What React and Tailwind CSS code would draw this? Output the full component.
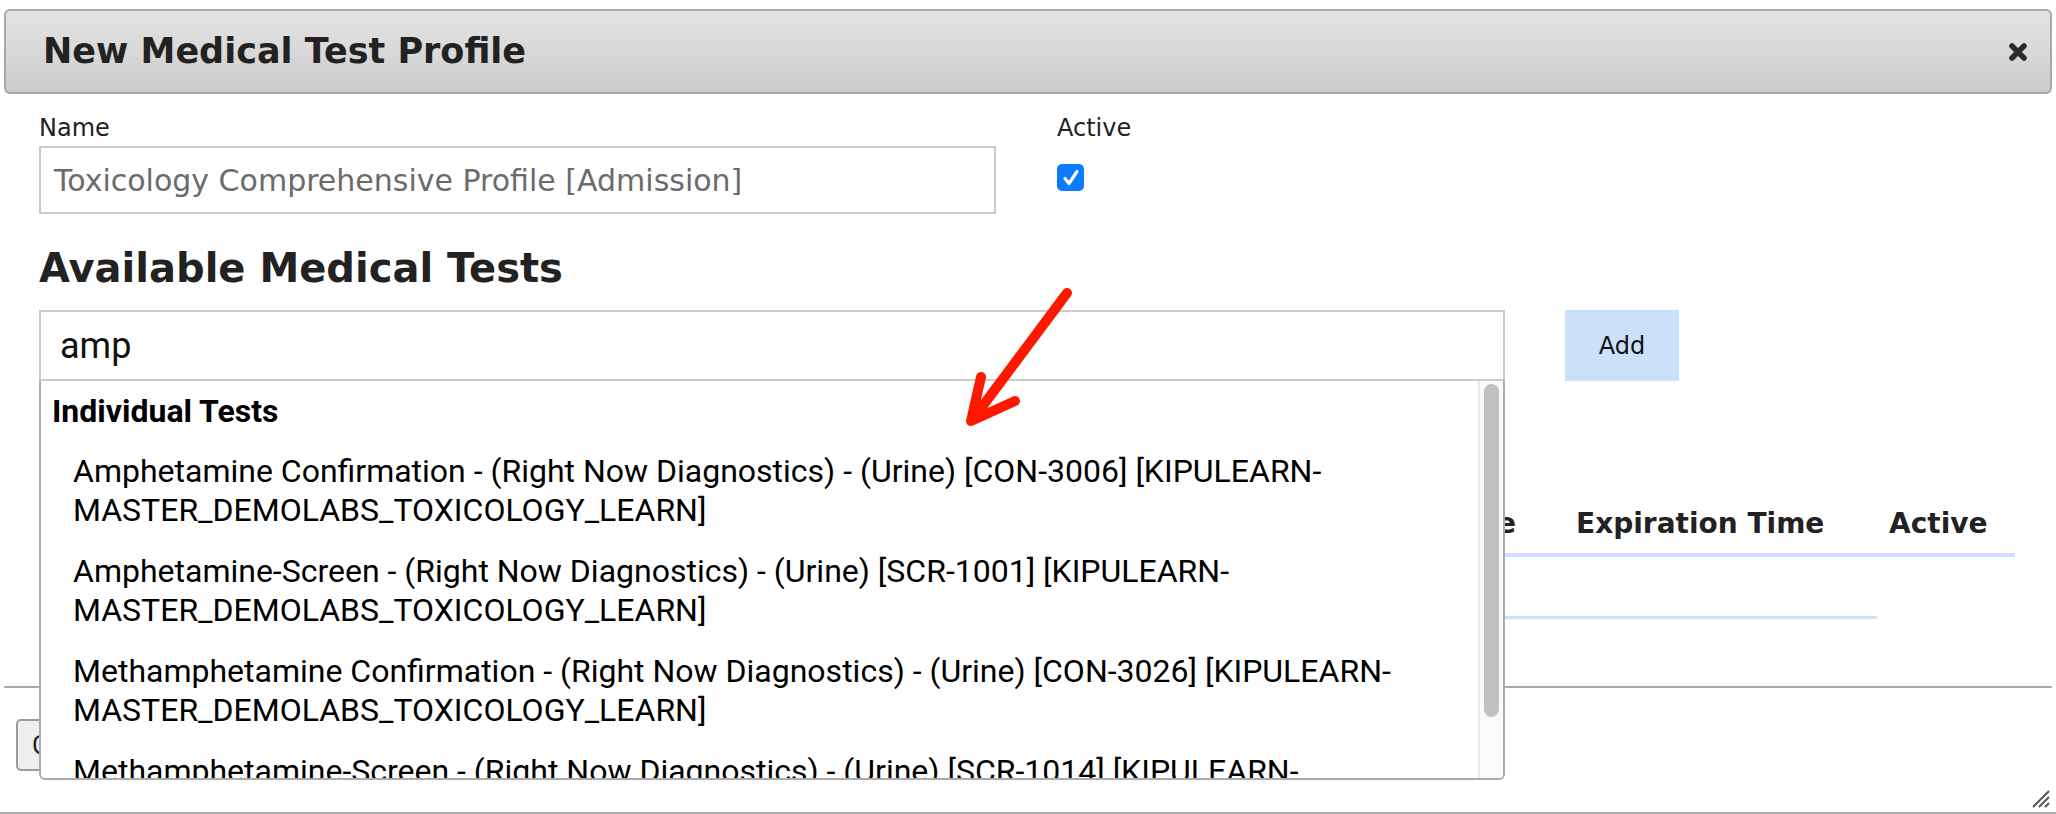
import { useState } from 'react'

const results = [
  { name: 'Amphetamine Confirmation - (Right Now Diagnostics) - (Urine) [CON-3006] [KIPULEARN-', rest: 'MASTER_DEMOLABS_TOXICOLOGY_LEARN]' },
  { name: 'Amphetamine-Screen - (Right Now Diagnostics) - (Urine) [SCR-1001] [KIPULEARN-', rest: 'MASTER_DEMOLABS_TOXICOLOGY_LEARN]' },
  { name: 'Methamphetamine Confirmation - (Right Now Diagnostics) - (Urine) [CON-3026] [KIPULEARN-', rest: 'MASTER_DEMOLABS_TOXICOLOGY_LEARN]' },
  { name: 'Methamphetamine-Screen - (Right Now Diagnostics) - (Urine) [SCR-1014] [KIPULEARN-', rest: 'MASTER_DEMOLABS_TOXICOLOGY_LEARN]' },
]

function CloseIcon() {
  return (
    <svg width="22" height="22" viewBox="0 0 22 22">
      <path d="M5 5 L17 17 M17 5 L5 17" stroke="#2b2b2b" strokeWidth="5.5" strokeLinecap="round" />
    </svg>
  )
}

export default function App() {
  const [query, setQuery] = useState('amp')
  const [active, setActive] = useState(true)

  return (
    <div className="relative w-[2056px] h-[814px] overflow-hidden bg-white text-[#222] font-['DejaVu_Sans',sans-serif]">
      <div className="flex flex-col h-full border-b-2 border-[#a9a9a9]">
        {/* title bar */}
        <div className="mx-[4px] mt-[9px] h-[85px] shrink-0 flex items-center justify-between pl-[37px] pr-[21px] border-2 border-[#a8a8a8] rounded-[6px] bg-gradient-to-b from-[#e3e3e3] via-[#d9d9d9] to-[#cbcbcb]">
          <span className="text-[35px] font-bold leading-none text-[#222]">New Medical Test Profile</span>
          <button className="w-[22px] h-[22px] flex items-center justify-center"><CloseIcon /></button>
        </div>

        <div className="pl-[39px] pr-[41px] shrink-0">
          <div className="flex pt-[21px]">
            <div className="w-[957px]">
              <label className="block text-[24px] leading-[26px]">Name</label>
              <div className="mt-[5px] h-[68px] border-2 border-[#cbcbcb] flex items-center px-[13px] text-[30px] text-[#6b6b6b]">
                Toxicology Comprehensive Profile [Admission]
              </div>
            </div>
            <div className="ml-[61px]">
              <label className="block text-[24px] leading-[26px]">Active</label>
              <button
                onClick={() => setActive(!active)}
                className={`mt-[23px] w-[27px] h-[27px] rounded-[5px] flex items-center justify-center ${active ? 'bg-[#0b7bff]' : 'bg-white border-2 border-[#999]'}`}
              >
                {active && (
                  <svg width="22" height="22" viewBox="0 0 22 22">
                    <path d="M5 11.5 L9 16.5 L17 4.5" stroke="white" strokeWidth="3.2" fill="none" strokeLinecap="round" strokeLinejoin="round" />
                  </svg>
                )}
              </button>
            </div>
          </div>

          <h2 className="mt-[31px] text-[40px] leading-[46px] font-bold">Available Medical Tests</h2>

          <div className="mt-[19px] flex gap-[60px]">
            <div className="relative w-[1466px]">
              <input
                value={query}
                onChange={e => setQuery(e.target.value)}
                className="w-full h-[71px] border-2 border-[#cbcbcb] px-[19px] text-[36px] text-[#111] outline-none font-['Roboto',sans-serif]"
              />
              <div className="absolute top-full left-0 w-full h-[399px] z-10 flex bg-white border-x-2 border-b-2 border-[#ababab] rounded-b-[6px] overflow-hidden font-['Roboto',sans-serif] text-black">
                <div className="flex-1 overflow-hidden">
                  <div className="pl-[11px] pt-[15px] pb-[15px] text-[32px] leading-[30px] font-bold">Individual Tests</div>
                  {results.map(r => (
                    <div key={r.name} className="pl-[32px] py-[11px] text-[32px] leading-[39px]">
                      {r.name}<br />{r.rest}
                    </div>
                  ))}
                </div>
                <div className="w-[25px] shrink-0 border-l-2 border-[#e9e9e9] bg-[#fafafa] pt-[3px]">
                  <div className="mx-auto w-[15px] h-[333px] rounded-full bg-[#c1c1c1]" />
                </div>
              </div>
            </div>
            <button className="w-[114px] h-[71px] bg-[#cbe0fb] text-[24px] text-[#111]">Add</button>
          </div>

          {/* selected tests table (under the dropdown) */}
          <div className="mt-[127px]">
            <div className="flex text-[28px] font-bold leading-[32px] border-b-4 border-[#cbe0fb] pb-[13px]">
              <div className="w-[800px]">Medical Test</div>
              <div className="w-[707px] text-right pr-[30px]">Collection Time</div>
              <div className="w-[331px] pl-[30px]">Expiration Time</div>
              <div className="flex-1 pl-[12px]">Active</div>
            </div>
            <div className="flex h-[62px]">
              <div className="w-[1838px] border-b-[3px] border-[#cbe0fb]" />
            </div>
          </div>
        </div>

        {/* footer */}
        <div className="mt-[67px] mx-[4px] border-t-2 border-[#a9a9a9] flex-1 relative">
          <button className="ml-[12px] mt-[31px] h-[52px] px-[14px] rounded-[5px] border-2 border-[#9b9b9b] bg-[#efefef] text-[26px] font-['Roboto',sans-serif]">Cancel</button>
          <svg className="absolute right-[2px] bottom-[4px]" width="22" height="22" viewBox="0 0 22 22">
            <path d="M21 5 L5 21 M21 11 L11 21 M21 17 L17 21" stroke="#555" strokeWidth="2" />
          </svg>
        </div>
      </div>

      {/* red annotation arrow */}
      <svg className="absolute inset-0 pointer-events-none z-20" width="2056" height="814" viewBox="0 0 2056 814">
        <path d="M1067 293 L973 419" stroke="#ff1800" strokeWidth="10" strokeLinecap="round" fill="none" />
        <path d="M981 377 L971 421 L1015 401" stroke="#ff1800" strokeWidth="10" strokeLinecap="round" strokeLinejoin="round" fill="none" />
      </svg>
    </div>
  )
}
